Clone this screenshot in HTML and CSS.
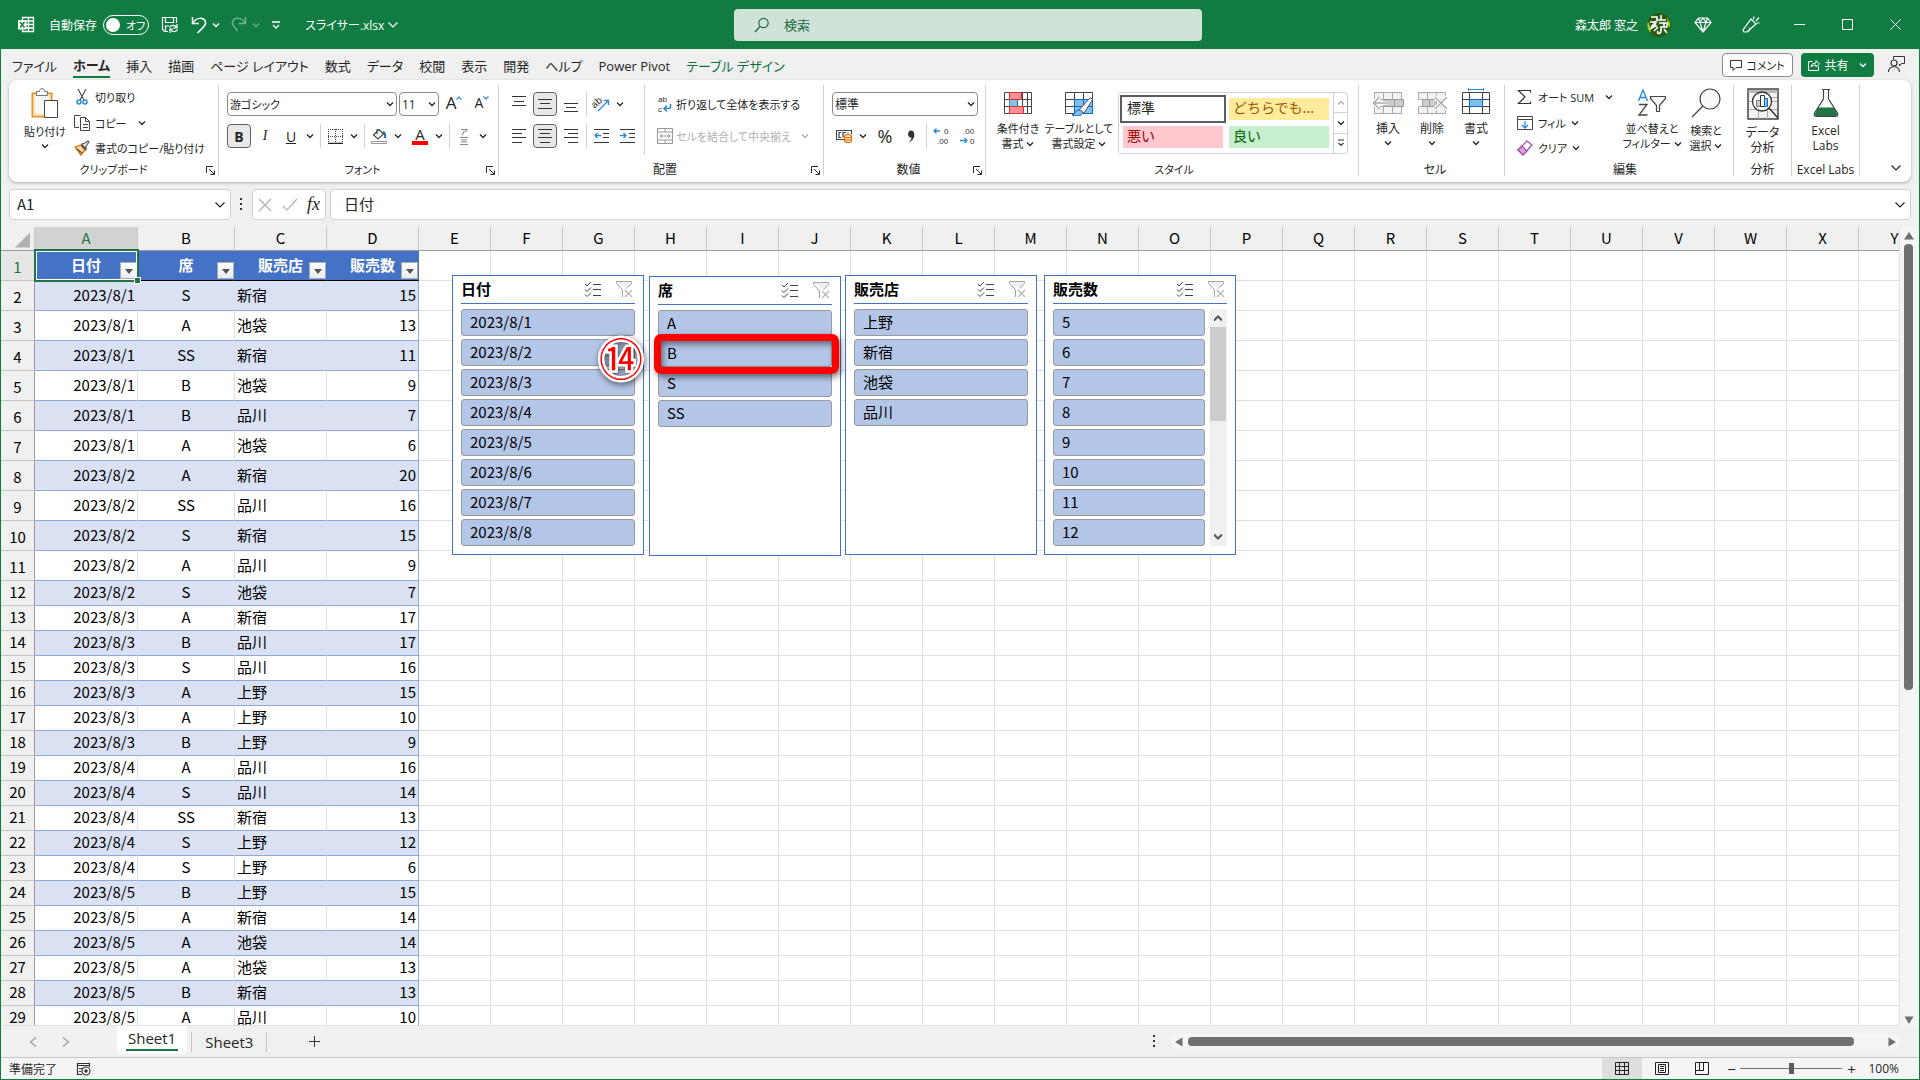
FILE: index.html
```html
<!DOCTYPE html>
<html lang="ja">
<head>
    <meta charset="UTF-8">
    <meta name="viewport" content="width=device-width, initial-scale=1.0">
    <title>スライサー.xlsx - Excel</title>
    <link rel="stylesheet" href="styles.css">
</head>
<body>
    <!-- Shared icons -->
    <svg class="defs" aria-hidden="true">
        <symbol id="chev" viewBox="0 0 8 8"><path d="M1 2.5L4 5.5L7 2.5" fill="none" stroke="currentColor" stroke-width="1.3"/></symbol>
        <symbol id="chev-big" viewBox="0 0 12 12"><path d="M1.5 3.5L6 8L10.5 3.5" fill="none" stroke="currentColor" stroke-width="1.2"/></symbol>
        <symbol id="launch" viewBox="0 0 9 9"><path d="M.5 7V.5H7M3 3l5 5M8.500 4.500v4h-4" fill="none" stroke="currentColor"/></symbol>
        <symbol id="multi" viewBox="0 0 18 16"><path d="M1 3l2 2 4-4M1 8.500l2 2 4-4M1 13.500l2 2 4-4M9 3.500h8M9 8.500h8M9 14.500h8" fill="none" stroke="#444"/></symbol>
        <symbol id="unfilter" viewBox="0 0 18 18"><path d="M1.500 1.500h15v2l-5 5M1.500 1.500v2l6 6v7.500" fill="#f0f0f0" stroke="#a6a6a6"/><path d="M10 10l7 7M17 10l-7 7" stroke="#b5b5b5" stroke-width="1.300"/></symbol>
    </svg>

    <div class="app">
        <!-- Title bar -->
        <header class="titlebar">
            <div class="quick">
                <svg width="18" height="18" viewBox="0 0 18 18"><path d="M5.500 1.500h11v14h-11zM11.500 1.500v14M5.500 5h11M5.500 8.500h11M5.500 12h11" fill="none" stroke="#fff" stroke-width="1.300"/><path d="M1 4h8.500v9.500H1z" fill="#fff"/><path d="M3 6l4.500 5.500M7.500 6L3 11.500" stroke="#107c41" stroke-width="1.500"/></svg>
                <label class="autosave">自動保存 <input type="checkbox" class="hidden-check"><span class="toggle">オフ</span></label>
                <button class="qbtn" aria-label="保存"><svg width="18" height="18" viewBox="0 0 18 18"><path d="M7 15.500H3.500l-2-2v-12h14V7M4.500 1.500v5h8v-5M4.500 15v-5H8" fill="none" stroke="#fff" stroke-width="1.200"/><path d="M8.500 11.500c1-2.500 5.500-3 7 0M16 8v4h-4M16.500 13.500c-1 2.500-5.500 3-7 0M9 17v-4h3" fill="none" stroke="#fff" stroke-width="1.200"/></svg></button>
                <button class="qbtn split" aria-label="元に戻す"><svg width="16" height="18" viewBox="0 0 16 18"><path d="M1.500 1v6.500H8M2 7c3-6 11-6 12.500-1 .800 3-2 5-8 11" fill="none" stroke="#fff" stroke-width="1.500"/></svg><svg class="chev"><use href="#chev"/></svg></button>
                <button class="qbtn split dim" aria-label="やり直し"><svg width="16" height="18" viewBox="0 0 16 18"><path d="M14.500 1v6.500H8M14 7C11 1 3 1 1.500 6c-.800 3 2 5 5 9" fill="none" stroke="#fff" stroke-width="1.500"/></svg><svg class="chev"><use href="#chev"/></svg></button>
                <button class="qbtn" aria-label="カスタマイズ"><svg width="10" height="10" viewBox="0 0 10 10"><path d="M1 2h8M2 5l3 3 3-3" fill="none" stroke="#fff" stroke-width="1.300"/></svg></button>
                <button class="filename">スライサー.xlsx <svg class="chev-big"><use href="#chev-big"/></svg></button>
            </div>
            <label class="search">
                <svg width="16" height="16" viewBox="0 0 16 16"><circle cx="9.500" cy="6" r="4.700" fill="none" stroke="#1b6b40" stroke-width="1.200"/><path d="M6 9.500L1 15" stroke="#1b6b40" stroke-width="1.300"/></svg>
                <input type="search" placeholder="検索" aria-label="検索">
            </label>
            <div class="account">
                <span>森太郎 窓之</span>
                <svg width="24" height="24" viewBox="0 0 24 24"><circle cx="12" cy="12" r="12" fill="#2b5a15"/><path d="M1 8a12 12 0 0 0 1 10l2 2-1-6zM20 4l3 6v5l-2-3z" fill="#9bd21c"/><path d="M4 4h6v3h4M14 2v5h5M3 9h6l-4 4h5M9 8l-1 5-5 3M12 10h8v4h-6v3M11 14l-4 4M14 17c0 5-5 4-3 1M17 16l3 4M17 9v5" fill="none" stroke="#fff" stroke-width="1.600"/></svg>
                <button class="winbtn" aria-label="Premium"><svg width="18" height="16" viewBox="0 0 18 16"><path d="M4.500 1h9L17 5.500 9 15 1 5.500zM1 5.500h16M6 5.500L9 15l3-9.500L9 1 6 5.500 4.500 1M12 5.500L13.500 1" fill="none" stroke="#fff" stroke-width="1.200"/></svg></button>
                <button class="winbtn" aria-label="新機能"><svg width="18" height="18" viewBox="0 0 18 18"><path d="M9 3l5 5-9 8H2l-1-2zM5 15c2 1 4-2 2-3M11.500 3.500L12 .500M14 5l3-3.500M14.500 7h3" fill="none" stroke="#fff" stroke-width="1.200"/></svg></button>
                <button class="winbtn" aria-label="最小化"><svg width="11" height="11" viewBox="0 0 11 11"><path d="M0 5.500h11" stroke="#fff"/></svg></button>
                <button class="winbtn" aria-label="最大化"><svg width="11" height="11" viewBox="0 0 11 11"><path d="M.5.500h10v10H.5z" fill="none" stroke="#fff"/></svg></button>
                <button class="winbtn" aria-label="閉じる"><svg width="11" height="11" viewBox="0 0 11 11"><path d="M.5.500l10 10M10.500.500l-10 10" stroke="#fff"/></svg></button>
            </div>
        </header>

        <!-- Ribbon tabs -->
        <nav class="tabs">
            <a href="#">ファイル</a>
            <a href="#" class="active">ホーム</a>
            <a href="#">挿入</a>
            <a href="#">描画</a>
            <a href="#">ページ レイアウト</a>
            <a href="#">数式</a>
            <a href="#">データ</a>
            <a href="#">校閲</a>
            <a href="#">表示</a>
            <a href="#">開発</a>
            <a href="#">ヘルプ</a>
            <a href="#">Power Pivot</a>
            <a href="#" class="context">テーブル デザイン</a>
            <div class="tab-actions">
                <button class="comment"><svg width="12" height="12" viewBox="0 0 12 12"><path d="M.5 1.500h11v7H6l-3 3v-3H.5z" fill="none" stroke="#333"/></svg>コメント</button>
                <button class="share"><svg width="12" height="12" viewBox="0 0 12 12"><path d="M4.500 2.500h-4v9h10v-4M3 8c.500-3 2-4 5-4V1.500L11.500 5 8 8V6C6 6 4.500 6.500 3 8z" fill="none" stroke="#fff"/></svg>共有<svg class="chev"><use href="#chev"/></svg></button>
                <button class="person" aria-label="プレゼンス"><svg width="17" height="17" viewBox="0 0 17 17"><path d="M5.500 3.500v-3h11v7h-3l-2 2.500V8" fill="none" stroke="#333"/><circle cx="6" cy="7" r="3" fill="none" stroke="#333" stroke-width="1.200"/><path d="M.5 16c0-7 11-7 11 0" fill="none" stroke="#333" stroke-width="1.200"/></svg></button>
            </div>
        </nav>

        <!-- Ribbon -->
        <section class="ribbon">
            <div class="group clipboard">
                <div class="group-body">
                    <button class="big"><svg width="28" height="31" viewBox="0 0 28 31"><path d="M1.500 5.500h19v23h-19z" fill="#fff" stroke="#e8912d" stroke-width="2"/><path d="M3 7h16v20H3z" fill="#f8f8f8" stroke="#fbd99b" stroke-width="1.500"/><path d="M5.500 7.500v-4h3c0-4 5-4 5 0h3v4z" fill="#fff" stroke="#777"/><path d="M13.500 12.500h13v17h-13z" fill="#fff" stroke="#444"/></svg><span>貼り付け</span><svg class="chev"><use href="#chev"/></svg></button>
                    <div class="stack">
                        <button class="small"><svg width="16" height="16" viewBox="0 0 16 16"><path d="M4 0l6 11M12 0L6 11" stroke="#444" stroke-width="1.100"/><circle cx="5" cy="13" r="2" fill="none" stroke="#2b88d8" stroke-width="1.500"/><circle cx="11" cy="13" r="2" fill="none" stroke="#2b88d8" stroke-width="1.500"/></svg>切り取り</button>
                        <button class="small"><svg width="16" height="16" viewBox="0 0 16 16"><path d="M5 12.500H.5v-12h6" fill="none" stroke="#444"/><path d="M6.500 2.500h5l4 4v9h-9zM11.500 2.500v4h4M9 9.500h5M9 12.500h5" fill="#fff" stroke="#444"/></svg>コピー<svg class="chev gap"><use href="#chev"/></svg></button>
                        <button class="small"><svg width="16" height="16" viewBox="0 0 16 16"><path d="M1 7l6-2 4 5-4 5z" fill="#fcd5a5" stroke="#e06c00" stroke-width="1.300"/><path d="M3 9l5 4M7 5l5 5M8 4l3-1 3-2 1 1-3 4v3z" fill="none" stroke="#555" stroke-width="1.200"/></svg>書式のコピー/貼り付け</button>
                    </div>
                </div>
                <div class="group-name">クリップボード<button class="launcher" aria-label="クリップボード"><svg width="9" height="9"><use href="#launch"/></svg></button></div>
            </div>

            <div class="group font">
                <div class="rows">
                    <div class="row">
                        <span class="combo font-name"><select aria-label="フォント"><option>游ゴシック</option></select><svg class="chev"><use href="#chev"/></svg></span>
                        <span class="combo font-size"><select aria-label="サイズ"><option>11</option></select><svg class="chev"><use href="#chev"/></svg></span>
                        <button class="tool wide" aria-label="拡大"><span class="glyph">A</span><svg class="mini" viewBox="0 0 6 4"><path d="M.5 3.500L3 1l2.500 2.500" fill="none" stroke="#2b88d8" stroke-width="1.200"/></svg></button>
                        <button class="tool wide" aria-label="縮小"><span class="glyph less">A</span><svg class="mini" viewBox="0 0 6 4"><path d="M.5.500L3 3 5.500.500" fill="none" stroke="#2b88d8" stroke-width="1.200"/></svg></button>
                    </div>
                    <div class="row">
                        <button class="tool on"><b>B</b></button>
                        <button class="tool"><i>I</i></button>
                        <button class="tool"><u>U</u></button><button class="arrow" aria-label="下線"><svg class="chev"><use href="#chev"/></svg></button>
                        <span class="bar"></span>
                        <button class="tool" aria-label="罫線"><svg width="15" height="15" viewBox="0 0 15 15"><path d="M0 .5h15M.5 0v14M14.500 0v14M7.500 0v14M0 7.500h15" stroke="#444" stroke-dasharray="1 1"/><path d="M0 14.500h15" stroke="#222" stroke-width="1.500"/></svg></button><button class="arrow" aria-label="罫線の種類"><svg class="chev"><use href="#chev"/></svg></button>
                        <span class="bar"></span>
                        <button class="tool" aria-label="塗りつぶし"><svg width="16" height="16" viewBox="0 0 16 16"><path d="M8 1.500l4.500 4.500-5.500 5L2.500 7z M6 1v5" fill="#fff" stroke="#444" stroke-width="1.200"/><path d="M12 4c2 0 2.500 3 2 6" fill="none" stroke="#1f6fb8" stroke-width="2"/><path d="M.5 13.500h15v2H.5z" fill="#fff" stroke="#999"/></svg></button><button class="arrow" aria-label="塗りつぶしの色"><svg class="chev"><use href="#chev"/></svg></button>
                        <span class="space"></span>
                        <button class="tool color" aria-label="フォントの色"><span>A</span></button><button class="arrow" aria-label="色の選択"><svg class="chev"><use href="#chev"/></svg></button>
                        <span class="bar"></span>
                        <button class="tool" aria-label="ふりがな"><svg width="10" height="17" viewBox="0 0 10 17"><path d="M2 1.500h6L6 4M5 3c0 2-1 3-2 4M1 9.500h8M2 12h6M2 14h6M1 16.500h8" fill="none" stroke="#888" stroke-width="1.100"/></svg></button><button class="arrow" aria-label="ふりがなの設定"><svg class="chev"><use href="#chev"/></svg></button>
                    </div>
                </div>
                <div class="group-name">フォント<button class="launcher" aria-label="フォントの設定"><svg width="9" height="9"><use href="#launch"/></svg></button></div>
            </div>

            <div class="group align">
                <div class="group-body">
                    <div class="rows">
                        <div class="row">
                            <button class="tool" aria-label="上揃え"><svg width="14" height="16" viewBox="0 0 14 16"><path d="M0 .5h14M2 5.500h10M0 9.500h14" stroke="#333"/></svg></button>
                            <button class="tool on" aria-label="上下中央揃え"><svg width="14" height="16" viewBox="0 0 14 16"><path d="M0 3.500h14M2 7.500h10M0 12.500h14" stroke="#333"/></svg></button>
                            <button class="tool" aria-label="下揃え"><svg width="14" height="16" viewBox="0 0 14 16"><path d="M0 7.500h14M2 11.500h10M0 15.500h14" stroke="#333"/></svg></button>
                            <span class="bar"></span>
                            <button class="tool" aria-label="方向"><svg class="letters" width="17" height="16" viewBox="0 0 17 16"><text x="-1" y="10" class="icon-text slanted" transform="rotate(-42 4 8)">ab</text><path d="M5 15L15.500 4.500M11 4.500h4.500v4.500" fill="none" stroke="#2b88d8" stroke-width="1.300"/></svg></button><button class="arrow" aria-label="方向の設定"><svg class="chev"><use href="#chev"/></svg></button>
                        </div>
                        <div class="row">
                            <button class="tool" aria-label="左揃え"><svg width="14" height="14" viewBox="0 0 14 14"><path d="M0 .5h14M0 4.500h10M0 8.500h14M0 13.500h10" stroke="#333"/></svg></button>
                            <button class="tool on" aria-label="中央揃え"><svg width="14" height="14" viewBox="0 0 14 14"><path d="M0 .5h14M2 4.500h10M0 8.500h14M2 13.500h10" stroke="#333"/></svg></button>
                            <button class="tool" aria-label="右揃え"><svg width="14" height="14" viewBox="0 0 14 14"><path d="M0 .5h14M4 4.500h10M0 8.500h14M4 13.500h10" stroke="#333"/></svg></button>
                            <span class="bar"></span>
                            <button class="tool" aria-label="インデントを減らす"><svg width="15" height="14" viewBox="0 0 15 14"><path d="M0 .5h15M9 4.500h6M9 8.500h6M0 13.500h15" stroke="#333"/><path d="M7 6.500H1M3.500 4L1 6.500 3.500 9" fill="none" stroke="#2b88d8" stroke-width="1.300"/></svg></button>
                            <button class="tool" aria-label="インデントを増やす"><svg width="15" height="14" viewBox="0 0 15 14"><path d="M0 .5h15M9 4.500h6M9 8.500h6M0 13.500h15" stroke="#333"/><path d="M0 6.500h6M3.500 4L6 6.500 3.500 9" fill="none" stroke="#2b88d8" stroke-width="1.300"/></svg></button>
                        </div>
                    </div>
                    <div class="rows wrap">
                        <button class="small"><svg class="letters" width="16" height="18" viewBox="0 0 16 18"><text x="1" y="7" class="icon-text">ab</text><text x="1" y="17" class="icon-text">c</text><path d="M13.500 9v3c0 1-1 1.500-2 1.500H7.500M10 10.500l-3 3 3 3" fill="none" stroke="#2b88d8" stroke-width="1.500"/></svg>折り返して全体を表示する</button>
                        <button class="small off" disabled><svg width="16" height="16" viewBox="0 0 16 16"><path d="M.5.500h15v15H.5zM.5 4h15M.5 12h15M8 .5V4M8 12v3.500M3 8h10M5 6L3 8l2 2M11 6l2 2-2 2" fill="none" stroke="#999"/></svg>セルを結合して中央揃え<svg class="chev end"><use href="#chev"/></svg></button>
                    </div>
                </div>
                <div class="group-name">配置<button class="launcher" aria-label="配置の設定"><svg width="9" height="9"><use href="#launch"/></svg></button></div>
            </div>

            <div class="group number">
                <div class="rows">
                    <div class="row"><span class="combo format"><select aria-label="表示形式"><option>標準</option></select><svg class="chev"><use href="#chev"/></svg></span></div>
                    <div class="row">
                        <button class="tool" aria-label="通貨"><svg width="17" height="14" viewBox="0 0 17 14"><path d="M8 10.500H.5v-9h15V5M5 3.500H3v5h2M7 8.500v-5h3M12 3.500v1" fill="none" stroke="#444" stroke-width="1.200"/><path d="M8.500 7c0-2 7-2 7 0v5c0 2-7 2-7 0zM8.500 7.500c1 1.500 6 1.500 7 0M8.500 10c1 1.500 6 1.500 7 0" fill="#ffe3c2" stroke="#e06c00" stroke-width="1.200"/></svg></button><button class="arrow" aria-label="通貨の種類"><svg class="chev"><use href="#chev"/></svg></button>
                        <span class="space"></span>
                        <button class="tool pct">%</button>
                        <button class="tool" aria-label="桁区切り"><svg width="8" height="13" viewBox="0 0 8 13"><path d="M1.500 12.500C4 11 4.500 9 4.300 7.500 0 8 0 .5 4 .5c5 0 4.500 10-2.500 12z" fill="#333"/></svg></button>
                        <span class="bar"></span>
                        <button class="tool" aria-label="小数点以下の表示桁数を増やす"><svg class="letters" width="16" height="18" viewBox="0 0 16 18"><path d="M7 4H1M3.500 1.500L1 4l2.500 2.500" fill="none" stroke="#2b88d8" stroke-width="1.300"/><text x="11" y="7" class="icon-text">0</text><text x="4" y="17" class="icon-text">.00</text></svg></button>
                        <button class="tool" aria-label="小数点以下の表示桁数を減らす"><svg class="letters" width="16" height="18" viewBox="0 0 16 18"><text x="4" y="7" class="icon-text">.00</text><text x="11" y="17" class="icon-text">0</text><path d="M1 13.500h7M5.500 11L8 13.500 5.500 16" fill="none" stroke="#2b88d8" stroke-width="1.300"/></svg></button>
                    </div>
                </div>
                <div class="group-name">数値<button class="launcher" aria-label="数値の設定"><svg width="9" height="9"><use href="#launch"/></svg></button></div>
            </div>

            <div class="group styles">
                <div class="group-body">
                    <button class="big"><svg width="30" height="28" viewBox="0 0 30 28"><path d="M1.500 4.500h27v21h-27zM1.500 11.500h27M1.500 18.500h27M6.500 4.500v21M19.500 4.500v21M24.500 4.500v21" fill="#fff" stroke="#444"/><path d="M6.500 4.500h12v7h-12zM6.500 18.500h14v7h-14z" fill="#ff8f94" stroke="#d13438"/><path d="M6.500 12h8v6h-8z" fill="#83beec"/><path d="M14.500 12v6" stroke="#1f6fb8"/></svg><span>条件付き<br>書式 <svg class="chev"><use href="#chev"/></svg></span></button>
                    <button class="big"><svg width="30" height="28" viewBox="0 0 30 28"><path d="M1.500 4.500h27v21h-27zM1.500 11.500h27M1.500 18.500h27M10.500 4.500v21M19.500 4.500v21" fill="#fff" stroke="#444"/><path d="M10.500 11.500h18v14h-18z" fill="#83beec" stroke="#0f6cbd"/><path d="M10.500 18.500h18M19.500 11.500v14" stroke="#0f6cbd"/><path d="M15 22L26 10l3 1-9 14z" fill="#fff" stroke="#555"/><path d="M8 27c3 0 3-5 7-5 3 0 5 3 2 5-2 1.500-6 1-9 0z" fill="#83beec" stroke="#0f6cbd"/></svg><span>テーブルとして<br>書式設定 <svg class="chev"><use href="#chev"/></svg></span></button>
                    <div class="gallery">
                        <div class="swatches">
                            <button class="swatch normal">標準</button>
                            <button class="swatch neutral">どちらでも...</button>
                            <button class="swatch bad">悪い</button>
                            <button class="swatch good">良い</button>
                        </div>
                        <div class="gallery-nav">
                            <button class="off" aria-label="前へ"><svg class="chev flip"><use href="#chev"/></svg></button>
                            <button aria-label="次へ"><svg class="chev"><use href="#chev"/></svg></button>
                            <button aria-label="その他"><svg width="8" height="8" viewBox="0 0 8 8"><path d="M1 1h6M1.500 4L4 6.500 6.500 4" fill="none" stroke="#333" stroke-width="1.200"/></svg></button>
                        </div>
                    </div>
                </div>
                <div class="group-name">スタイル</div>
            </div>

            <div class="group cells">
                <div class="group-body">
                    <button class="big"><svg width="32" height="28" viewBox="0 0 32 28"><path d="M2.500 4.500h27v21h-27zM2.500 11.500h27M2.500 18.500h27M11.500 4.500v21M20.500 4.500v21" fill="#f3f3f3" stroke="#aaa"/><path d="M12.500 11.500h19v7h-19zM22.500 11.500v7" fill="#ccc" stroke="#999"/><path d="M14 15H2M7.500 9L1.500 15l6 6" fill="none" stroke="#fff" stroke-width="4"/><path d="M14 15H2M7.500 9L1.500 15l6 6" fill="none" stroke="#aaa" stroke-width="1.500"/></svg><span>挿入</span><svg class="chev"><use href="#chev"/></svg></button>
                    <button class="big"><svg width="30" height="28" viewBox="0 0 30 28"><path d="M1.500 4.500h27v7h-27zM1.500 18.500h27v7h-27zM10.500 4.500v7M19.500 4.500v7M10.500 18.500v7M19.500 18.500v7" fill="#f3f3f3" stroke="#aaa"/><path d="M5.500 11.500h14v7h-14zM12.500 11.500v7" fill="#ccc" stroke="#999"/><path d="M18 9l12 12M30 9L18 21" stroke="#fff" stroke-width="4"/><path d="M18 9l12 12M30 9L18 21" stroke="#aaa" stroke-width="1.500"/></svg><span>削除</span><svg class="chev"><use href="#chev"/></svg></button>
                    <button class="big"><svg width="30" height="28" viewBox="0 0 30 28"><path d="M1.500 4.500h27v21h-27zM1.500 11.500h27M1.500 18.500h27M8.500 4.500v21M21.500 4.500v21" fill="#fff" stroke="#444"/><path d="M8.500 11.500h13v7h-13z" fill="#83beec" stroke="#0f6cbd"/><path d="M7.500 1.500h15M7.500 0v3M22.500 0v3" stroke="#2b88d8"/></svg><span>書式</span><svg class="chev"><use href="#chev"/></svg></button>
                </div>
                <div class="group-name">セル</div>
            </div>

            <div class="group editing">
                <div class="group-body">
                    <div class="stack">
                        <button class="small"><svg width="16" height="16" viewBox="0 0 16 16"><path d="M13.500 3.500v-2h-12L8 8l-6.500 6.500h12v-2" fill="none" stroke="#333" stroke-width="1.200"/></svg>オート SUM<svg class="chev gap"><use href="#chev"/></svg></button>
                        <button class="small"><svg width="16" height="14" viewBox="0 0 16 14"><path d="M.5.500h15v13H.5zM.5 3.500h15" fill="#fff" stroke="#444"/><path d="M8 5v7M5 9l3 3 3-3" fill="none" stroke="#2b88d8" stroke-width="1.300"/></svg>フィル<svg class="chev"><use href="#chev"/></svg></button>
                        <button class="small"><svg width="16" height="16" viewBox="0 0 16 16"><path d="M1 10l9-9 5 4-9 10z" fill="#fff" stroke="#a349a4" stroke-width="1.200"/><path d="M1 10l4-4 5 5-4 4z" fill="#d9a0dc" stroke="#a349a4" stroke-width="1.200"/></svg>クリア<svg class="chev"><use href="#chev"/></svg></button>
                    </div>
                    <button class="big"><svg width="30" height="28" viewBox="0 0 30 28"><path d="M1.500 13L6 2l4.500 11M3 9.500h6" fill="none" stroke="#2b88d8" stroke-width="1.400"/><path d="M2 16.500h8L2 27h8.500" fill="none" stroke="#444" stroke-width="1.300"/><path d="M13.500 8.500h15v2l-6 7v6h-3v-6l-6-7z" fill="#fafafa" stroke="#444" stroke-width="1.200"/></svg><span>並べ替えと<br>フィルター <svg class="chev"><use href="#chev"/></svg></span></button>
                    <button class="big"><svg width="30" height="30" viewBox="0 0 30 30"><circle cx="19" cy="11" r="10" fill="#fafafa" stroke="#444" stroke-width="1.200"/><path d="M12 18L1 29" stroke="#444" stroke-width="1.300"/></svg><span>検索と<br>選択 <svg class="chev"><use href="#chev"/></svg></span></button>
                </div>
                <div class="group-name">編集</div>
            </div>

            <div class="group analysis">
                <div class="group-body">
                    <button class="big"><svg width="32" height="32" viewBox="0 0 32 32"><path d="M1 1h30v30H1z" fill="#f3f3f3" stroke="#444" stroke-width="1.500"/><path d="M1.500 2h29v3h-29z" fill="#bbb"/><path d="M2 13.500h28M2 21.500h28M11.500 22v9M20.500 22v9M24 9.500h6" stroke="#aaa"/><circle cx="15" cy="13.500" r="9.500" fill="#fff" stroke="#333" stroke-width="1.300"/><path d="M22 20l9 10" stroke="#333" stroke-width="1.500"/><path d="M9.500 12.500h4v6h-4z" fill="#ccc" stroke="#777"/><path d="M13.500 7.500h4v11h-4z" fill="#fff" stroke="#333"/><path d="M17.500 10.500h3v8h-3z" fill="#83beec" stroke="#0f6cbd"/></svg><span>データ<br>分析</span></button>
                </div>
                <div class="group-name">分析</div>
            </div>

            <div class="group labs">
                <div class="group-body">
                    <button class="big"><svg width="26" height="30" viewBox="0 0 26 30"><path d="M9 1.500h8M10.500 2v9L1.500 25c-1 2 0 3.500 2 3.500h19c2 0 3-1.500 2-3.500l-9-14V2" fill="#fff" stroke="#444" stroke-width="1.200"/><path d="M5 19.500h16l3 6c.500 1.500 0 2.500-1.500 2.500h-19C2 28 1.500 27 2 25.500z" fill="#217346"/></svg><span>Excel<br>Labs</span></button>
                </div>
                <div class="group-name">Excel Labs</div>
            </div>
            <button class="collapse" aria-label="リボンを折りたたむ"><svg class="chev-big"><use href="#chev-big"/></svg></button>
        </section>

        <!-- Formula bar -->
        <div class="formula-bar">
            <label class="box name-box"><input type="text" value="A1" aria-label="名前ボックス"><svg class="chev-big"><use href="#chev-big"/></svg></label>
            <svg class="dots" width="3" height="13" viewBox="0 0 3 13"><path d="M0 1h2M0 6h2M0 11h2" stroke="#333" stroke-width="2"/></svg>
            <div class="box fx">
                <button class="off" aria-label="キャンセル"><svg width="14" height="14" viewBox="0 0 14 14"><path d="M1 1l12 12M13 1L1 13" stroke="currentColor" stroke-width="1.200"/></svg></button>
                <button class="off" aria-label="入力"><svg width="16" height="14" viewBox="0 0 16 14"><path d="M1 8l4 4L15 1" fill="none" stroke="currentColor" stroke-width="1.200"/></svg></button>
                <button class="fx-btn">fx</button>
            </div>
            <label class="box formula"><input type="text" value="日付" aria-label="数式"><svg class="chev-big"><use href="#chev-big"/></svg></label>
        </div>

        <!-- Worksheet -->
        <main class="workspace">
            <div class="sheet">
                <table class="grid" id="grid"></table>

                <div class="slicer date">
                    <div class="slicer-head"><span>日付</span><svg width="18" height="16"><use href="#multi"/></svg><svg width="18" height="18"><use href="#unfilter"/></svg></div>
                    <div class="items">
                        <button>2023/8/1</button>
                        <button>2023/8/2</button>
                        <button>2023/8/3</button>
                        <button>2023/8/4</button>
                        <button>2023/8/5</button>
                        <button>2023/8/6</button>
                        <button>2023/8/7</button>
                        <button>2023/8/8</button>
                    </div>
                </div>
                <div class="slicer seat">
                    <div class="slicer-head"><span>席</span><svg width="18" height="16"><use href="#multi"/></svg><svg width="18" height="18"><use href="#unfilter"/></svg></div>
                    <div class="items">
                        <button>A</button>
                        <button>B</button>
                        <button>S</button>
                        <button>SS</button>
                    </div>
                </div>
                <div class="slicer shop">
                    <div class="slicer-head"><span>販売店</span><svg width="18" height="16"><use href="#multi"/></svg><svg width="18" height="18"><use href="#unfilter"/></svg></div>
                    <div class="items">
                        <button>上野</button>
                        <button>新宿</button>
                        <button>池袋</button>
                        <button>品川</button>
                    </div>
                </div>
                <div class="slicer sales">
                    <div class="slicer-head"><span>販売数</span><svg width="18" height="16"><use href="#multi"/></svg><svg width="18" height="18"><use href="#unfilter"/></svg></div>
                    <div class="scrolling">
                        <div class="items">
                            <button>5</button>
                            <button>6</button>
                            <button>7</button>
                            <button>8</button>
                            <button>9</button>
                            <button>10</button>
                            <button>11</button>
                            <button>12</button>
                        </div>
                        <div class="slicer-scroll"><svg width="8" height="7" viewBox="0 0 8 7"><path d="M0 5.500L4 1.500l4 4" fill="none" stroke="#555" stroke-width="2"/></svg><span></span><svg width="8" height="7" viewBox="0 0 8 7"><path d="M0 1.500l4 4 4-4" fill="none" stroke="#555" stroke-width="2"/></svg></div>
                    </div>
                </div>

                <!-- Step marker -->
                <div class="frame"></div>
                <div class="step">⑭</div>
            </div>
            <div class="vscroll"><svg width="10" height="8" viewBox="0 0 10 8"><path d="M5 0l5 7.500H0z" fill="#707070"/></svg><span></span><svg width="10" height="8" viewBox="0 0 10 8"><path d="M5 8L.5.500h9z" fill="#707070"/></svg></div>
        </main>

        <!-- Sheet tabs -->
        <div class="sheet-tabs">
            <button class="nav" aria-label="前のシート"><svg width="8" height="12" viewBox="0 0 8 12"><path d="M7 1.500L1.500 6 7 10.500" fill="none" stroke="#999" stroke-width="1.200"/></svg></button>
            <button class="nav" aria-label="次のシート"><svg width="8" height="12" viewBox="0 0 8 12"><path d="M1 1.500L6.500 6 1 10.500" fill="none" stroke="#999" stroke-width="1.200"/></svg></button>
            <a href="#" class="sheet-tab current"><span>Sheet1</span></a>
            <a href="#" class="sheet-tab">Sheet3</a>
            <button class="add" aria-label="新しいシート"><svg width="11" height="11" viewBox="0 0 11 11"><path d="M5.500 0v11M0 5.500h11" stroke="#333"/></svg></button>
            <svg class="dots" width="3" height="13" viewBox="0 0 3 13"><path d="M0 1h2M0 6h2M0 11h2" stroke="#333" stroke-width="2"/></svg>
            <div class="hscroll"><svg width="8" height="10" viewBox="0 0 8 10"><path d="M0 5L7.500.500v9z" fill="#707070"/></svg><span></span><svg width="8" height="10" viewBox="0 0 8 10"><path d="M8 5L.5.500v9z" fill="#707070"/></svg></div>
        </div>

        <!-- Status bar -->
        <footer class="status">
            <span>準備完了</span>
            <svg width="15" height="14" viewBox="0 0 15 14"><path d="M6 12.500H1.500v-11h12V5M1.500 3.500h12M3 6.500h4M3 9.500h2" fill="none" stroke="#333" stroke-width="1.200"/><circle cx="10" cy="9" r="4" fill="#f5f5f5" stroke="#333" stroke-width="1.200"/><circle cx="10" cy="9" r="1.700" fill="#333"/></svg>
            <div class="views">
                <button class="view picked" aria-label="標準"><svg width="14" height="13" viewBox="0 0 14 13"><path d="M.5.500h13v12H.5zM.5 4.500h13M.5 8.500h13M4.500.500v12M9.500.500v12" fill="none" stroke="#222"/></svg></button>
                <button class="view" aria-label="ページ レイアウト"><svg width="14" height="13" viewBox="0 0 14 13"><path d="M.5.500h13v12H.5zM3.500 2.500h7v8h-7zM5 4.500h4M5 6.500h4M5 8.500h4" fill="none" stroke="#222"/></svg></button>
                <button class="view" aria-label="改ページ プレビュー"><svg width="14" height="13" viewBox="0 0 14 13"><path d="M.5.500h13v12H.5zM.5 8.500h8v-8M4.500.500v8" fill="none" stroke="#222"/></svg></button>
            </div>
            <button class="zoom-btn">−</button>
            <input type="range" class="zoom" min="0" max="200" value="100" aria-label="ズーム">
            <button class="zoom-btn">+</button>
            <span class="percent">100%</span>
        </footer>
    </div>
    <script src="script.js"></script>
</body>
</html>
```
FILE: styles.css
```css
* {
    box-sizing: border-box;
}

body {
    margin: 0;
    font-family: "Open Sans", "Noto Sans CJK JP", sans-serif;
    font-size: 12px;
    font-feature-settings: "palt";
    color: #262626;
}

button, input, select {
    font: inherit;
    font-feature-settings: inherit;
    color: inherit;
    border: none;
    background: none;
    padding: 0;
    margin: 0;
}

button {
    display: flex;
    align-items: center;
    justify-content: center;
    white-space: nowrap;
}

a {
    color: inherit;
    text-decoration: none;
}

svg {
    flex: none;
}

.defs {
    display: none;
}

.chev {
    width: 8px;
    height: 8px;
}

.chev-big {
    width: 12px;
    height: 12px;
}

.flip {
    transform: scaleY(-1);
}

.off {
    color: #b1b1b1;
}

.app {
    display: flex;
    flex-direction: column;
    height: 100vh;
    border: 1px solid #107c41;
    border-top: none;
    background: #f0f0f0;
    overflow: hidden;
}

/* Title bar */
.titlebar {
    display: grid;
    grid-template-columns: 1fr 468px 1fr;
    align-items: center;
    height: 49px;
    padding-left: 16px;
    background: #107c41;
    color: #fff;
}

.quick {
    display: flex;
    align-items: center;
}

.autosave {
    display: flex;
    align-items: center;
    margin: 0 12px 0 14px;
    white-space: nowrap;
}

.hidden-check {
    position: absolute;
    opacity: 0;
}

.toggle {
    display: flex;
    align-items: center;
    gap: 6px;
    width: 46px;
    height: 20px;
    margin-left: 6px;
    padding-left: 2px;
    border: 1px solid #fff;
    border-radius: 10px;
    font-size: 11px;
}

.toggle::before {
    content: "";
    width: 14px;
    height: 14px;
    border-radius: 50%;
    background: #fff;
}

.qbtn {
    margin-right: 12px;
}

.split {
    gap: 5px;
    margin-right: 11px;
}

.dim {
    opacity: 0.4;
}

.filename {
    margin-left: 12px;
    gap: 3px;
}

.search {
    display: flex;
    align-items: center;
    gap: 14px;
    height: 32px;
    padding-left: 20px;
    border-radius: 4px;
    background: #cfe3d8;
}

.search input {
    flex: 1;
    font-size: 13px;
    outline: none;
}

.search input::placeholder {
    color: #1b6b40;
    opacity: 1;
}

.account {
    display: flex;
    align-items: center;
    justify-content: flex-end;
}

.account span {
    margin-right: 9px;
}

.account > svg {
    margin-right: 8px;
}

.winbtn {
    width: 48px;
    height: 40px;
}

/* Ribbon tabs */
.tabs {
    display: flex;
    align-items: center;
    gap: 16px;
    height: 31px;
    padding: 0 14px 0 11px;
    font-size: 13px;
}

.tabs a {
    padding-top: 2px;
    line-height: 24px;
    white-space: nowrap;
}

.tabs .active {
    font-weight: bold;
    border-bottom: 2px solid #107c41;
    line-height: 22px;
}

.tabs .context {
    color: #0f703b;
}

.tab-actions {
    display: flex;
    align-items: center;
    gap: 8px;
    margin-left: auto;
    font-size: 12px;
}

.tab-actions button {
    height: 24px;
    gap: 4px;
    border-radius: 4px;
}

.comment {
    width: 71px;
    border: 1px solid #8a8a8a;
    background: #fff;
    font-size: 11px;
}

.share {
    width: 73px;
    background: #107c41;
    color: #fff;
}

.share .chev {
    margin-left: 6px;
}

.tab-actions .person {
    margin-left: 6px;
}

/* Ribbon */
.ribbon {
    display: flex;
    height: 102px;
    margin: 0 8px;
    padding: 5px 0 6px;
    border-radius: 8px;
    background: #fff;
    box-shadow: 0 1px 3px rgba(0, 0, 0, 0.3);
}

.group {
    display: flex;
    flex-direction: column;
    flex: none;
    border-right: 1px solid #d1d1d1;
}

.group-body {
    display: flex;
    height: 76px;
}

.group-name {
    position: relative;
    height: 18px;
    line-height: 18px;
    margin-top: auto;
    margin-bottom: -3px;
    text-align: center;
    white-space: nowrap;
}

.clipboard .group-name, .font .group-name, .styles .group-name {
    font-size: 11px;
}

.launcher {
    position: absolute;
    right: 3px;
    bottom: 4px;
}

.clipboard { width: 210px; }
.font { width: 280px; padding-left: 8px; }
.align { width: 325px; padding-left: 8px; }
.number { width: 162px; padding-left: 8px; }
.styles { width: 373px; padding-left: 4px; }
.cells { width: 146px; padding-left: 7px; }
.editing { width: 229px; padding-left: 12px; }
.analysis { width: 58px; }
.labs { width: 68px; }

.big {
    flex-direction: column;
    justify-content: flex-start;
    min-width: 44px;
    height: 72px;
    padding-top: 3px;
    font-size: 11px;
    line-height: 15px;
}

.cells .big, .analysis .big, .labs .big {
    font-size: 12px;
}

.big > svg:first-child {
    margin-bottom: 5px;
}

.big > .chev {
    margin-top: 3px;
}

.clipboard .big {
    width: 58px;
    margin-left: 7px;
}

.stack {
    display: flex;
    flex-direction: column;
    justify-content: space-between;
    align-items: flex-start;
    height: 75px;
}

.small {
    gap: 5px;
    height: 24px;
    font-size: 11px;
}

.small .gap {
    margin-left: 6px;
}

.rows {
    display: flex;
    flex-direction: column;
    gap: 8px;
    padding-top: 7px;
}

.row {
    display: flex;
    align-items: center;
    height: 24px;
}

.combo {
    position: relative;
    display: flex;
    height: 24px;
    margin-right: 2px;
    border: 1px solid #8a8a8a;
    border-radius: 4px;
    background: #fff;
}

.combo select {
    flex: 1;
    appearance: none;
    padding-left: 2px;
}

.combo .chev {
    position: absolute;
    right: 2px;
    top: 7px;
}

.font-name { width: 170px; font-size: 11px; }
.font-size { width: 40px; }
.format { width: 146px; }

.tool {
    width: 24px;
    height: 24px;
    margin-right: 2px;
    border-radius: 4px;
    font-size: 14px;
}

.tool:has(+ .arrow), .tool:has(+ .bar) {
    margin-right: 0;
}

.tool.wide {
    align-items: flex-start;
    width: 26px;
}

.tool.on {
    border: 1px solid #616161;
    background: #e8e8e8;
}

.tool i {
    font-family: "Liberation Serif", serif;
}

.glyph {
    font-size: 17px;
    line-height: 22px;
}

.less {
    font-size: 14px;
}

.mini {
    width: 6px;
    height: 4px;
    margin-top: 4px;
}

.color span {
    width: 16px;
    height: 18px;
    line-height: 14px;
    font-size: 15px;
    border-bottom: 4px solid #f00;
}

.tool.pct {
    font-size: 18px;
}

.arrow {
    width: 14px;
    height: 24px;
}

.bar {
    width: 1px;
    height: 24px;
    margin: 0 2px 0 3px;
    background: #d1d1d1;
}

.space {
    width: 3px;
}

.letters {
    overflow: visible;
}

.icon-text {
    font-family: "Liberation Sans", sans-serif;
    font-size: 8px;
    fill: #333;
}

.slanted {
    font-size: 10px;
}

.wrap {
    flex: 1;
    height: 69px;
    margin-left: 3px;
    padding-left: 12px;
    border-left: 1px solid #d1d1d1;
}

.wrap .small {
    justify-content: flex-start;
    gap: 3px;
}

.wrap .end {
    margin-left: auto;
    margin-right: 14px;
}

.styles .big:nth-child(1) {
    width: 56px;
}

.styles .big:nth-child(2) {
    width: 66px;
}

.gallery {
    display: flex;
    width: 230px;
    height: 62px;
    margin: 7px 0 0 6px;
    border: 1px solid #d1d1d1;
    border-radius: 4px;
}

.swatches {
    display: grid;
    grid-template-columns: 100px 100px;
    gap: 6px;
    flex: 1;
    padding: 5px 4px;
}

.swatch {
    justify-content: flex-start;
    height: 22px;
    padding: 0 0 4px 4px;
    font-family: "Noto Sans CJK JP", sans-serif;
    font-size: 14px;
    font-feature-settings: normal;
}

.normal {
    background: #fff;
    outline: 2px solid #5c5c5c;
    outline-offset: 1px;
}

.neutral { background: #ffeb9c; color: #9c5700; }
.bad { background: #ffc7ce; color: #9c0006; }
.good { background: #c6efce; color: #006100; }

.gallery-nav {
    display: flex;
    flex-direction: column;
    width: 15px;
    border-left: 1px solid #d1d1d1;
}

.gallery-nav button {
    flex: 1;
}

.gallery-nav button + button {
    border-top: 1px solid #d1d1d1;
}

.cells .big {
    width: 44px;
}

.editing .stack {
    width: 108px;
}

.editing .big {
    width: 54px;
}

.analysis .big, .labs .big {
    flex: 1;
}

.collapse {
    align-self: flex-end;
    margin-left: auto;
    padding: 0 9px 2px;
}

/* Formula bar */
.formula-bar {
    display: flex;
    align-items: center;
    padding: 7px 8px;
}

.box {
    display: flex;
    align-items: center;
    height: 31px;
    border: 1px solid #d1d1d1;
    border-radius: 4px;
    background: #fff;
    font-family: "Noto Sans CJK JP", sans-serif;
    font-size: 15px;
    font-feature-settings: normal;
}

.box input {
    flex: 1;
    min-width: 0;
    padding: 0 0 2px 7px;
    outline: none;
}

.box .chev-big {
    margin-right: 4px;
}

.name-box {
    width: 222px;
}

.formula-bar .dots {
    margin: 0 9px;
}

.fx {
    justify-content: space-between;
    width: 74px;
    padding: 0 5px;
    margin-right: 4px;
}

.fx-btn {
    font-family: "Liberation Serif", serif;
    font-style: italic;
    font-size: 18px;
}

.formula {
    flex: 1;
}

.formula input {
    padding-left: 13px;
}

/* Worksheet */
.workspace {
    display: flex;
    flex: 1;
    min-height: 0;
}

.sheet {
    position: relative;
    flex: 1;
    min-width: 0;
    overflow: hidden;
    border-bottom: 1px solid #e1e1e1;
    font-family: "Noto Sans CJK JP", sans-serif;
    font-size: 15px;
    font-feature-settings: normal;
    color: #000;
}

.grid {
    width: 100%;
    table-layout: fixed;
    border-collapse: separate;
    border-spacing: 0;
    line-height: 22px;
}

.col-head { width: 34px; }
.col-a { width: 103px; }
.col-b { width: 97px; }
.col-c { width: 92px; }
.col-n { width: 72px; }

.grid th, .grid td {
    height: 25px;
    padding: 0 2px 2px;
    border-right: 1px solid #e1e1e1;
    border-bottom: 1px solid #e1e1e1;
    background: #fff;
    font-weight: normal;
    white-space: nowrap;
}

.grid .tall th, .grid .tall td {
    height: 30px;
}

.grid thead th {
    height: 24px;
    padding-bottom: 1px;
    background: #f0f0f0;
    border-right-color: #c6c6c6;
    border-bottom-color: #9b9b9b;
}

.grid thead .active-col {
    background: #d2d2d2;
}

.grid tbody th {
    vertical-align: bottom;
    background: #f0f0f0;
    border-right-color: #9b9b9b;
    border-bottom-color: #c6c6c6;
}

.grid .active-col, .grid tbody .active-row {
    color: #217346;
}

.grid tbody .active-row {
    background: #e6e6e6;
}

.corner::after {
    content: "";
    display: block;
    width: 15px;
    height: 15px;
    margin: 4px 0 0 12px;
    background: #b1b1b1;
    clip-path: polygon(100% 0, 100% 100%, 0 100%);
}

.grid .data {
    border-bottom-color: #8ea9db;
}

.grid .band {
    background: #d9e1f2;
    border-right-color: #d9e1f2;
}

.grid .last {
    border-right-color: #8ea9db;
}

.grid .head {
    position: relative;
    background: #4472c4;
    border-right-color: #4472c4;
    border-bottom-color: #000;
    color: #fff;
    font-weight: bold;
    text-align: center;
}

.grid .right { text-align: right; }
.grid .center { text-align: center; }

.filter {
    position: absolute;
    right: 0;
    bottom: 1px;
    width: 17px;
    height: 17px;
    border: 1px solid #ababab;
    background: linear-gradient(#fff, #e9ecf2);
}

.filter::after {
    content: "";
    margin-top: 1px;
    border: 4px solid transparent;
    border-top: 5px solid #555;
    border-bottom: none;
}

.selection {
    position: absolute;
    z-index: 1;
    inset: -2px -2px -2px -1px;
    border: 2px solid #217346;
    box-shadow: inset 0 0 0 1px #fff;
    pointer-events: none;
}

.selection::after {
    content: "";
    position: absolute;
    right: -3px;
    bottom: -3px;
    width: 5px;
    height: 5px;
    background: #217346;
    outline: 1px solid #fff;
}

/* Slicers */
.slicer {
    position: absolute;
    top: 48px;
    width: 192px;
    height: 280px;
    padding: 0 8px;
    border: 1px solid #4472c4;
    background: #fff;
}

.date { left: 451px; }
.seat { left: 648px; top: 49px; }
.shop { left: 844px; }
.sales { left: 1043px; }

.slicer-head {
    display: flex;
    align-items: center;
    gap: 13px;
    height: 28px;
    padding: 0 2px 1px 0;
    border-bottom: 1px solid #4472c4;
    font-weight: bold;
}

.slicer-head span {
    margin-right: auto;
    padding-bottom: 1px;
}

.items {
    display: flex;
    flex-direction: column;
    flex: 1;
    gap: 3px;
    padding-top: 5px;
}

.items button {
    justify-content: flex-start;
    height: 27px;
    padding: 0 0 2px 8px;
    border: 1px solid #999;
    border-radius: 3px;
    background: #b4c6e7;
}

.scrolling {
    display: flex;
    gap: 5px;
}

.slicer-scroll {
    display: flex;
    flex-direction: column;
    align-items: center;
    width: 17px;
    margin-top: 5px;
    padding: 6px 1px 6px 0;
    background: #f0f0f0;
}

.slicer-scroll span {
    width: 16px;
    height: 94px;
    margin: 5px 0 auto;
    background: #cdcdcd;
}

.frame {
    position: absolute;
    left: 653px;
    top: 107px;
    width: 185px;
    height: 40px;
    border: 7px solid #f00;
    border-radius: 7px;
    box-shadow: 2px 3px 6px rgba(0, 0, 0, 0.5), inset 2px 3px 6px rgba(0, 0, 0, 0.5);
}

.step {
    position: absolute;
    left: 598px;
    top: 108px;
    font-size: 44px;
    line-height: 44px;
    color: #f00;
    -webkit-text-stroke: 5px #fff;
    paint-order: stroke fill;
    filter: drop-shadow(1px 2px 3px rgba(0, 0, 0, 0.6));
}

/* Scroll bars */
.vscroll {
    display: flex;
    flex-direction: column;
    align-items: center;
    width: 20px;
    padding: 5px 2px 2px 0;
    border-left: 1px solid #e1e1e1;
    background: #f5f5f5;
}

.vscroll span {
    width: 9px;
    height: 446px;
    margin: 4px 0 auto;
    border-radius: 4px;
    background: #707070;
}

.hscroll {
    display: flex;
    align-items: center;
    flex: 0 1 729px;
    height: 17px;
    margin-right: 19px;
    padding: 0 4px;
    border-radius: 8px;
    background: #f5f5f5;
}

.hscroll span {
    flex: 1;
    height: 9px;
    margin: 0 34px 0 5px;
    border-radius: 4px;
    background: #707070;
}

/* Sheet tabs */
.sheet-tabs {
    display: flex;
    align-items: center;
    height: 32px;
    padding-left: 15px;
    border-bottom: 1px solid #c6c6c6;
    font-size: 15px;
}

.nav {
    width: 33px;
    height: 24px;
}

.sheet-tab {
    padding: 0 13px;
}

.sheet-tab.current {
    align-self: flex-start;
    height: 28px;
    margin-left: 35px;
    padding: 0 9px;
    border-radius: 0 0 6px 6px;
    background: #fff;
}

.current span {
    display: block;
    height: 25px;
    line-height: 25px;
    padding: 0 2px;
    border-bottom: 2px solid #107c41;
}

.sheet-tab:not(.current) {
    margin-left: 4px;
    border-left: 1px solid #c6c6c6;
    border-right: 1px solid #c6c6c6;
}

.add {
    width: 94px;
    height: 24px;
}

.sheet-tabs .dots {
    margin: 0 15px 0 auto;
}

/* Status bar */
.status {
    display: flex;
    align-items: center;
    height: 21px;
    padding: 0 20px 0 8px;
    background: #f5f5f5;
}

.status > svg {
    margin-left: 19px;
}

.views {
    display: flex;
    margin-left: auto;
}

.view {
    width: 40px;
    height: 21px;
}

.picked {
    background: #dedede;
}

.zoom-btn {
    width: 18px;
    font-size: 15px;
}

.zoom {
    appearance: none;
    width: 102px;
    height: 16px;
    background: linear-gradient(#707070, #707070) center / 100% 1px no-repeat;
}

.zoom::-webkit-slider-thumb {
    appearance: none;
    width: 5px;
    height: 11px;
    background: #5c5c5c;
}

.percent {
    margin-left: 8px;
}
```
FILE: script.js
```js
// Sales table: date, seat, shop, quantity
const sales = [
    ["2023/8/1", "S", "新宿", 15],
    ["2023/8/1", "A", "池袋", 13],
    ["2023/8/1", "SS", "新宿", 11],
    ["2023/8/1", "B", "池袋", 9],
    ["2023/8/1", "B", "品川", 7],
    ["2023/8/1", "A", "池袋", 6],
    ["2023/8/2", "A", "新宿", 20],
    ["2023/8/2", "SS", "品川", 16],
    ["2023/8/2", "S", "新宿", 15],
    ["2023/8/2", "A", "品川", 9],
    ["2023/8/2", "S", "池袋", 7],
    ["2023/8/3", "A", "新宿", 17],
    ["2023/8/3", "B", "品川", 17],
    ["2023/8/3", "S", "品川", 16],
    ["2023/8/3", "A", "上野", 15],
    ["2023/8/3", "A", "上野", 10],
    ["2023/8/3", "B", "上野", 9],
    ["2023/8/4", "A", "品川", 16],
    ["2023/8/4", "S", "品川", 14],
    ["2023/8/4", "SS", "新宿", 13],
    ["2023/8/4", "S", "上野", 12],
    ["2023/8/4", "S", "上野", 6],
    ["2023/8/5", "B", "上野", 15],
    ["2023/8/5", "A", "新宿", 14],
    ["2023/8/5", "A", "池袋", 14],
    ["2023/8/5", "A", "池袋", 13],
    ["2023/8/5", "B", "新宿", 13],
    ["2023/8/5", "A", "品川", 10]
];
const titles = ["日付", "席", "販売店", "販売数"];
const letters = "ABCDEFGHIJKLMNOPQRSTUVWXY".split("");
const colClass = ["col-a", "col-b", "col-c", "col-c"];
const align = ["right", "center", "", "right"];
const blanks = "<td></td>".repeat(letters.length - 4);

let html = '<colgroup><col class="col-head">';
letters.forEach((l, i) => {
    html += `<col class="${colClass[i] || "col-n"}">`;
});
html += '</colgroup><thead><tr><th class="corner"></th>';
letters.forEach((l, i) => {
    html += `<th class="${i === 0 ? "active-col" : ""}">${l}</th>`;
});
html += '</tr></thead><tbody>';

// Header row of the table with its filter buttons
html += '<tr class="tall"><th class="active-row">1</th>';
titles.forEach((t, i) => {
    html += `<td class="head">${t}<button class="filter" aria-label="${t}"></button>`;
    html += (i === 0 ? '<span class="selection"></span>' : '') + '</td>';
});
html += blanks + '</tr>';

sales.forEach((row, r) => {
    html += `<tr class="${r < 10 ? "tall" : ""}"><th>${r + 2}</th>`;
    row.forEach((v, i) => {
        html += `<td class="data ${align[i]} ${r % 2 ? "" : "band"} ${i === 3 ? "last" : ""}">${v}</td>`;
    });
    html += blanks + '</tr>';
});

document.getElementById("grid").innerHTML = html + '</tbody>';
```
